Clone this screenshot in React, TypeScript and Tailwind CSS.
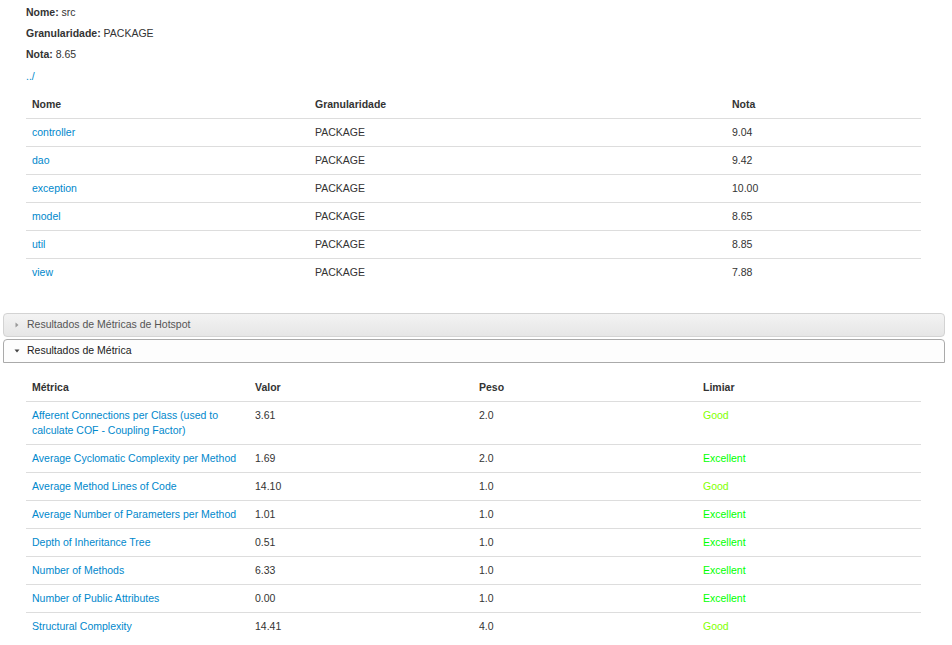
import React from "react";

const pkgs = [
  ["controller", "PACKAGE", "9.04"],
  ["dao", "PACKAGE", "9.42"],
  ["exception", "PACKAGE", "10.00"],
  ["model", "PACKAGE", "8.65"],
  ["util", "PACKAGE", "8.85"],
  ["view", "PACKAGE", "7.88"],
];

const metrics: [string, string, string, "Good" | "Excellent"][] = [
  ["Afferent Connections per Class (used to calculate COF - Coupling Factor)", "3.61", "2.0", "Good"],
  ["Average Cyclomatic Complexity per Method", "1.69", "2.0", "Excellent"],
  ["Average Method Lines of Code", "14.10", "1.0", "Good"],
  ["Average Number of Parameters per Method", "1.01", "1.0", "Excellent"],
  ["Depth of Inheritance Tree", "0.51", "1.0", "Excellent"],
  ["Number of Methods", "6.33", "1.0", "Excellent"],
  ["Number of Public Attributes", "0.00", "1.0", "Excellent"],
  ["Structural Complexity", "14.41", "4.0", "Good"],
];

export default function App() {
  return (
    <div
      className="w-[952px] h-[645px] overflow-hidden bg-white text-[10.5px] text-[#333333]"
      style={{ fontFamily: '"Liberation Sans", Arial, sans-serif' }}
    >
      <div className="pl-[26px] pt-[2px] mb-[4px]">
        <p className="leading-[21.2px]">
          <b>Nome:</b> src
        </p>
        <p className="leading-[21.2px]">
          <b>Granularidade:</b> PACKAGE
        </p>
        <p className="leading-[21.2px]">
          <b>Nota:</b> 8.65
        </p>
        <p className="leading-[21.2px]">
          <a className="text-[#0088cc]">../</a>
        </p>
      </div>

      <table className="ml-[26px] w-[895px] table-fixed border-collapse">
        <colgroup>
          <col className="w-[283px]" />
          <col className="w-[417px]" />
          <col className="w-[195px]" />
        </colgroup>
        <thead>
          <tr>
            <th className="text-left font-bold px-[6px] py-[6px] leading-[15px]">Nome</th>
            <th className="text-left font-bold px-[6px] py-[6px] leading-[15px]">Granularidade</th>
            <th className="text-left font-bold px-[6px] py-[6px] leading-[15px]">Nota</th>
          </tr>
        </thead>
        <tbody>
          {pkgs.map(([n, g, v]) => (
            <tr key={n}>
              <td className="border-t border-[#dddddd] px-[6px] py-[6px] leading-[15px] align-top">
                <a className="text-[#0088cc]">{n}</a>
              </td>
              <td className="border-t border-[#dddddd] px-[6px] py-[6px] leading-[15px] align-top">{g}</td>
              <td className="border-t border-[#dddddd] px-[6px] py-[6px] leading-[15px] align-top">{v}</td>
            </tr>
          ))}
        </tbody>
      </table>

      <div className="ml-[3px] w-[942px] mt-[27px]">
        <div className="h-[24px] pt-[1px] flex items-center border border-[#d3d3d3] rounded-[4px] bg-gradient-to-b from-[#f3f3f3] to-[#e6e6e6] text-[#555555]">
          <span className="ml-[10px] w-[13px] flex items-center">
            <svg width="6" height="6" viewBox="0 0 6 6">
              <path d="M1.5 0.5 L4.5 3 L1.5 5.5 Z" fill="#999999" />
            </svg>
          </span>
          <span>Resultados de Métricas de Hotspot</span>
        </div>
        <div className="mt-[2px] h-[24px] pt-[1px] flex items-center border border-[#aaaaaa] rounded-t-[4px] bg-[#fdfdfd] text-[#212121]">
          <span className="ml-[10px] w-[13px] flex items-center">
            <svg width="6" height="6" viewBox="0 0 6 6">
              <path d="M0.5 1.5 L5.5 1.5 L3 4.5 Z" fill="#444444" />
            </svg>
          </span>
          <span>Resultados de Métrica</span>
        </div>

        <div className="pt-[11px] pl-[23px]">
          <table className="w-[895px] table-fixed border-collapse">
            <colgroup>
              <col className="w-[223px]" />
              <col className="w-[224px]" />
              <col className="w-[224px]" />
              <col className="w-[224px]" />
            </colgroup>
            <thead>
              <tr>
                <th className="text-left font-bold px-[6px] py-[6px] leading-[15px]">Métrica</th>
                <th className="text-left font-bold px-[6px] py-[6px] leading-[15px]">Valor</th>
                <th className="text-left font-bold px-[6px] py-[6px] leading-[15px]">Peso</th>
                <th className="text-left font-bold px-[6px] py-[6px] leading-[15px]">Limiar</th>
              </tr>
            </thead>
            <tbody>
              {metrics.map(([m, v, p, l]) => (
                <tr key={m}>
                  <td className="border-t border-[#dddddd] px-[6px] py-[6px] leading-[15px] align-top">
                    <a className="text-[#0088cc]">{m}</a>
                  </td>
                  <td className="border-t border-[#dddddd] px-[6px] py-[6px] leading-[15px] align-top">{v}</td>
                  <td className="border-t border-[#dddddd] px-[6px] py-[6px] leading-[15px] align-top">{p}</td>
                  <td className="border-t border-[#dddddd] px-[6px] py-[6px] leading-[15px] align-top">
                    {l === "Good" ? (
                      <span className="text-[#7fff00]">Good</span>
                    ) : (
                      <span className="text-[#00ff00]">Excellent</span>
                    )}
                  </td>
                </tr>
              ))}
            </tbody>
          </table>
        </div>
      </div>
    </div>
  );
}
